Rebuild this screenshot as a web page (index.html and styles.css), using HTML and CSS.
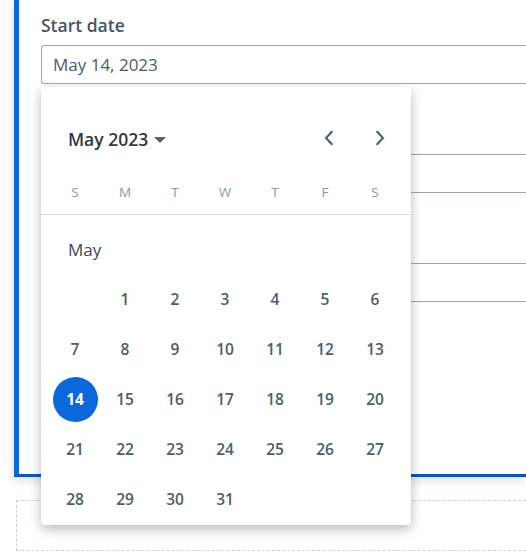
FILE: index.html
```html
<!DOCTYPE html>
<html>
<head>
<meta charset="utf-8">
<link rel="stylesheet" href="styles.css">
</head>
<body>
<div class="page">
  <div class="card">
    <div class="field">
      <div class="label">Start date</div>
      <div class="input">May 14, 2023</div>
    </div>
    <div class="field">
      <div class="label"></div>
      <div class="input"></div>
    </div>
    <div class="field">
      <div class="label"></div>
      <div class="input"></div>
    </div>

    <div class="popup">
      <div class="cal-head">
        <div class="month-btn">May 2023 <span class="caret"></span></div>
        <div class="nav">
          <div class="nav-btn">
            <svg width="10" height="16" viewBox="0 0 10 16"><path d="M8.3 1.3 L2 8 L8.3 14.7" fill="none" stroke="#4e5a66" stroke-width="2"/></svg>
          </div>
          <div class="nav-btn">
            <svg width="10" height="16" viewBox="0 0 10 16"><path d="M1.7 1.3 L8 8 L1.7 14.7" fill="none" stroke="#4e5a66" stroke-width="2"/></svg>
          </div>
        </div>
      </div>
      <div class="weekdays">
        <span>S</span><span>M</span><span>T</span><span>W</span><span>T</span><span>F</span><span>S</span>
      </div>
      <div class="month-label">May</div>
      <div class="days">
        <span></span><span>1</span><span>2</span><span>3</span><span>4</span><span>5</span><span>6</span>
        <span>7</span><span>8</span><span>9</span><span>10</span><span>11</span><span>12</span><span>13</span>
        <span class="sel"><b>14</b></span><span>15</span><span>16</span><span>17</span><span>18</span><span>19</span><span>20</span>
        <span>21</span><span>22</span><span>23</span><span>24</span><span>25</span><span>26</span><span>27</span>
        <span>28</span><span>29</span><span>30</span><span>31</span>
      </div>
    </div>
  </div>
  <div class="dashed"></div>
</div>
</body>
</html>
```

FILE: styles.css
```css
html, body {
  margin: 0;
  padding: 0;
  background: #ffffff;
  overflow: hidden;
}
body {
  font-family: "Open Sans", "Noto Sans", sans-serif;
  width: 526px;
  height: 560px;
}
.page {
  padding-left: 14px;
}
.card {
  position: relative;
  width: 512px;
  height: 477px;
  box-sizing: border-box;
  background: #fff;
  border-left: 5px solid #0a66dc;
  border-bottom: 3px solid #0b56bd;
  box-shadow: 0 3px 10px rgba(0, 0, 0, 0.14);
  padding: 13px 0 0 22px;
}
.field {
  margin-bottom: 38px;
}
.label {
  font-size: 17.5px;
  font-weight: 600;
  line-height: 24px;
  height: 24px;
  color: #4a5560;
  margin-bottom: 8px;
}
.input {
  height: 39px;
  box-sizing: border-box;
  border: 1px solid #9ca7b0;
  border-right: none;
  border-radius: 3px 0 0 3px;
  padding-left: 11px;
  font-size: 17px;
  line-height: 37px;
  color: #4b5a6a;
}
.popup {
  position: absolute;
  left: 22px;
  top: 87px;
  width: 370px;
  height: 438px;
  box-sizing: border-box;
  background: #fff;
  border-radius: 0 0 4px 4px;
  box-shadow: 0 4px 12px rgba(0, 0, 0, 0.28);
  padding-top: 37px;
}
.cal-head {
  display: flex;
  justify-content: space-between;
  align-items: center;
  height: 30px;
  padding: 0 6px 0 27px;
}
.month-btn {
  display: flex;
  align-items: center;
  font-size: 17.5px;
  font-weight: 600;
  color: #2f3a45;
}
.caret {
  display: inline-block;
  width: 0;
  height: 0;
  margin-left: 6px;
  margin-top: 2px;
  border-left: 6px solid transparent;
  border-right: 6px solid transparent;
  border-top: 6px solid #56626d;
}
.nav {
  display: flex;
  gap: 1px;
}
.nav-btn {
  width: 50px;
  height: 30px;
  display: flex;
  align-items: center;
  justify-content: center;
  margin-top: -2px;
}
.weekdays {
  display: grid;
  grid-template-columns: repeat(7, 50px);
  margin-top: 17px;
  padding: 0 11px 0 9px;
  height: 43px;
  border-bottom: 1px solid #d3d8dc;
  align-items: center;
  font-size: 13.5px;
  color: #8d98a2;
}
.weekdays span {
  text-align: center;
  margin-top: -1px;
}
.month-label {
  padding: 11px 0 0 27px;
  height: 48px;
  line-height: 48px;
  font-size: 17px;
  color: #3d4752;
}
.days {
  display: grid;
  grid-template-columns: repeat(7, 50px);
  grid-auto-rows: 50px;
  padding: 0 11px 0 9px;
  font-size: 15.5px;
  font-weight: 600;
  color: #4f5c69;
}
.days span {
  display: flex;
  align-items: center;
  justify-content: center;
}
.days .sel b {
  width: 45px;
  height: 45px;
  border-radius: 50%;
  background: #0a68dc;
  color: #fff;
  font-weight: 700;
  display: flex;
  align-items: center;
  justify-content: center;
}
.dashed {
  margin: 23px 0 0 2px;
  width: 510px;
  height: 51px;
  box-sizing: border-box;
  border: 1px dashed #c9d0d6;
  border-right: none;
}
```
